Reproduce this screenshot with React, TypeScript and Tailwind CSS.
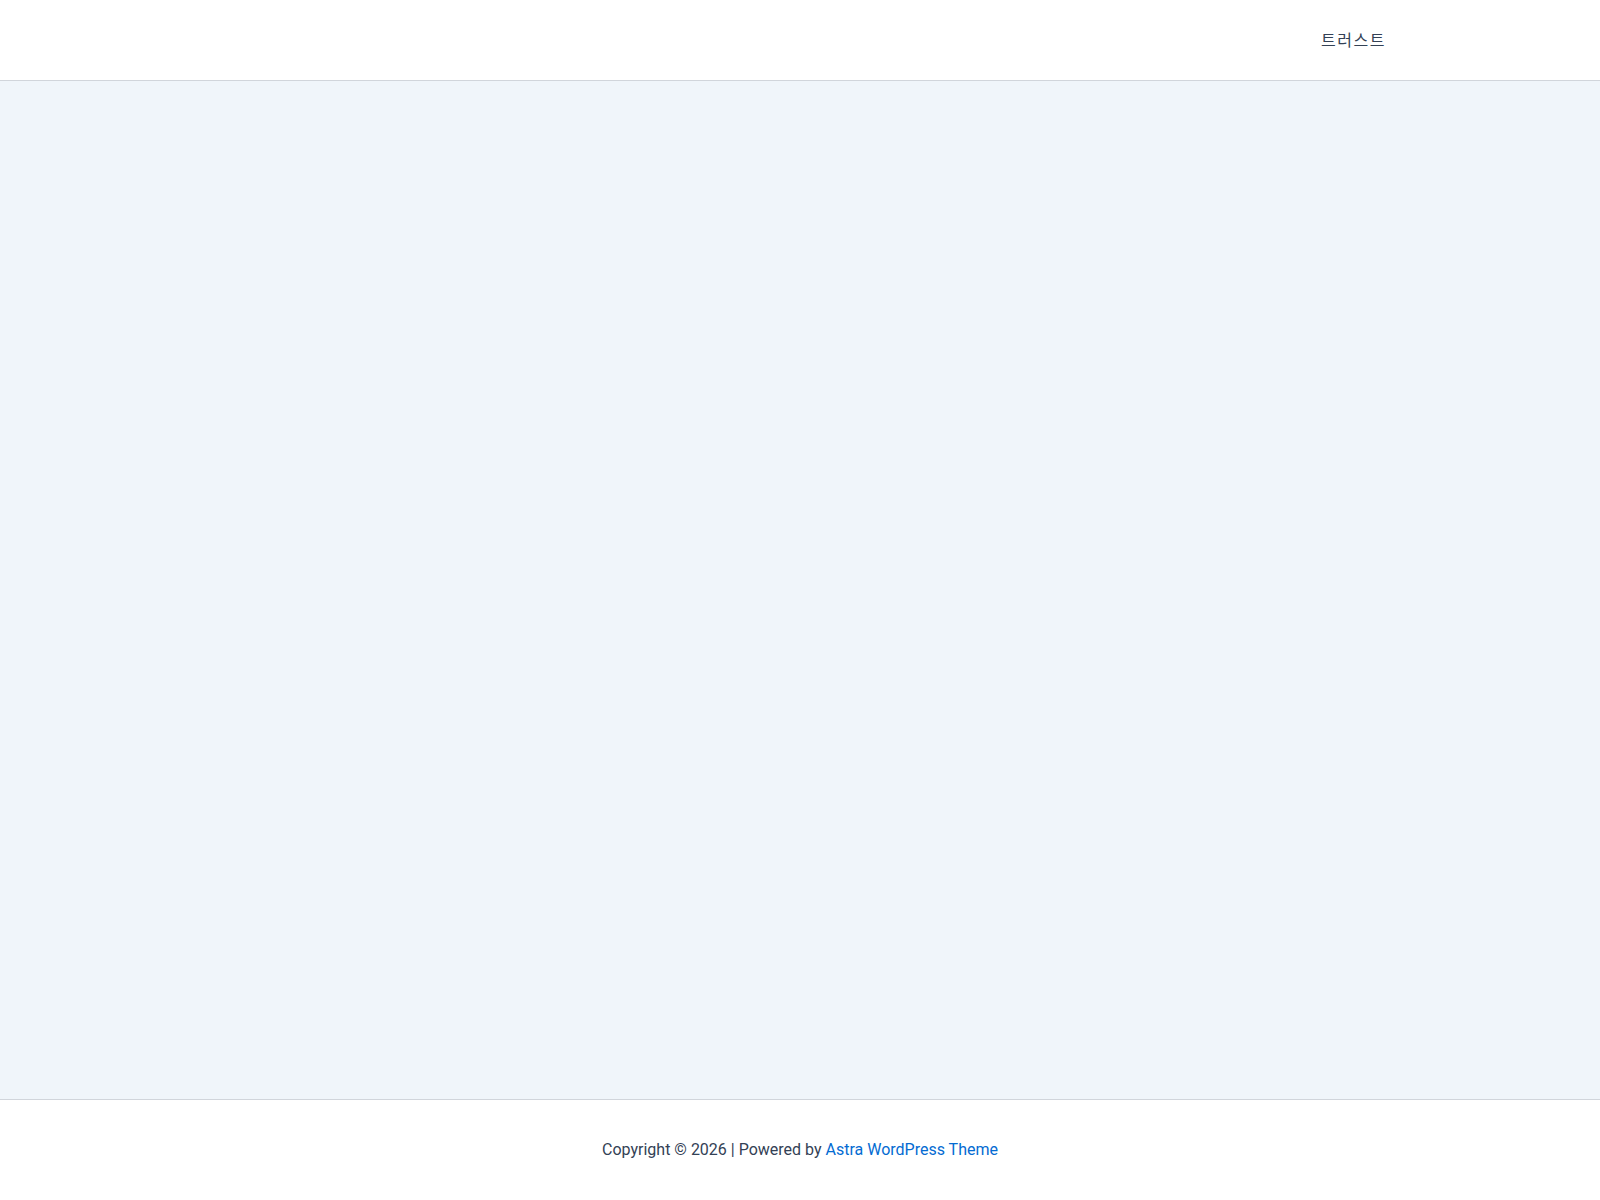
import React from "react";

export default function App() {
  return (
    <div className="flex min-h-screen w-full flex-col bg-[#f0f5fa] font-['Roboto','Noto_Sans_CJK_KR',sans-serif] text-[#334155]">
      {/* HEADER */}
      <header className="h-[81px] border-b border-[#d1d5db] bg-white">
        <div className="mx-auto flex h-20 max-w-[1240px] items-center justify-end px-[19px] pt-[2px]">
          <nav>
            <a href="#" className="px-[15px] text-[16px] leading-none tracking-[1.5px] text-[#334155]">
              트러스트
            </a>
          </nav>
        </div>
      </header>

      {/* CONTENT */}
      <main className="flex-1" />

      {/* FOOTER */}
      <footer className="h-[101px] border-t border-[#d1d5db] bg-white">
        <div className="flex h-[100px] items-center justify-center text-base">
          <p>
            Copyright © 2026 | Powered by{" "}
            <a href="#" className="text-[#046bd2]">
              Astra WordPress Theme
            </a>
          </p>
        </div>
      </footer>
    </div>
  );
}
